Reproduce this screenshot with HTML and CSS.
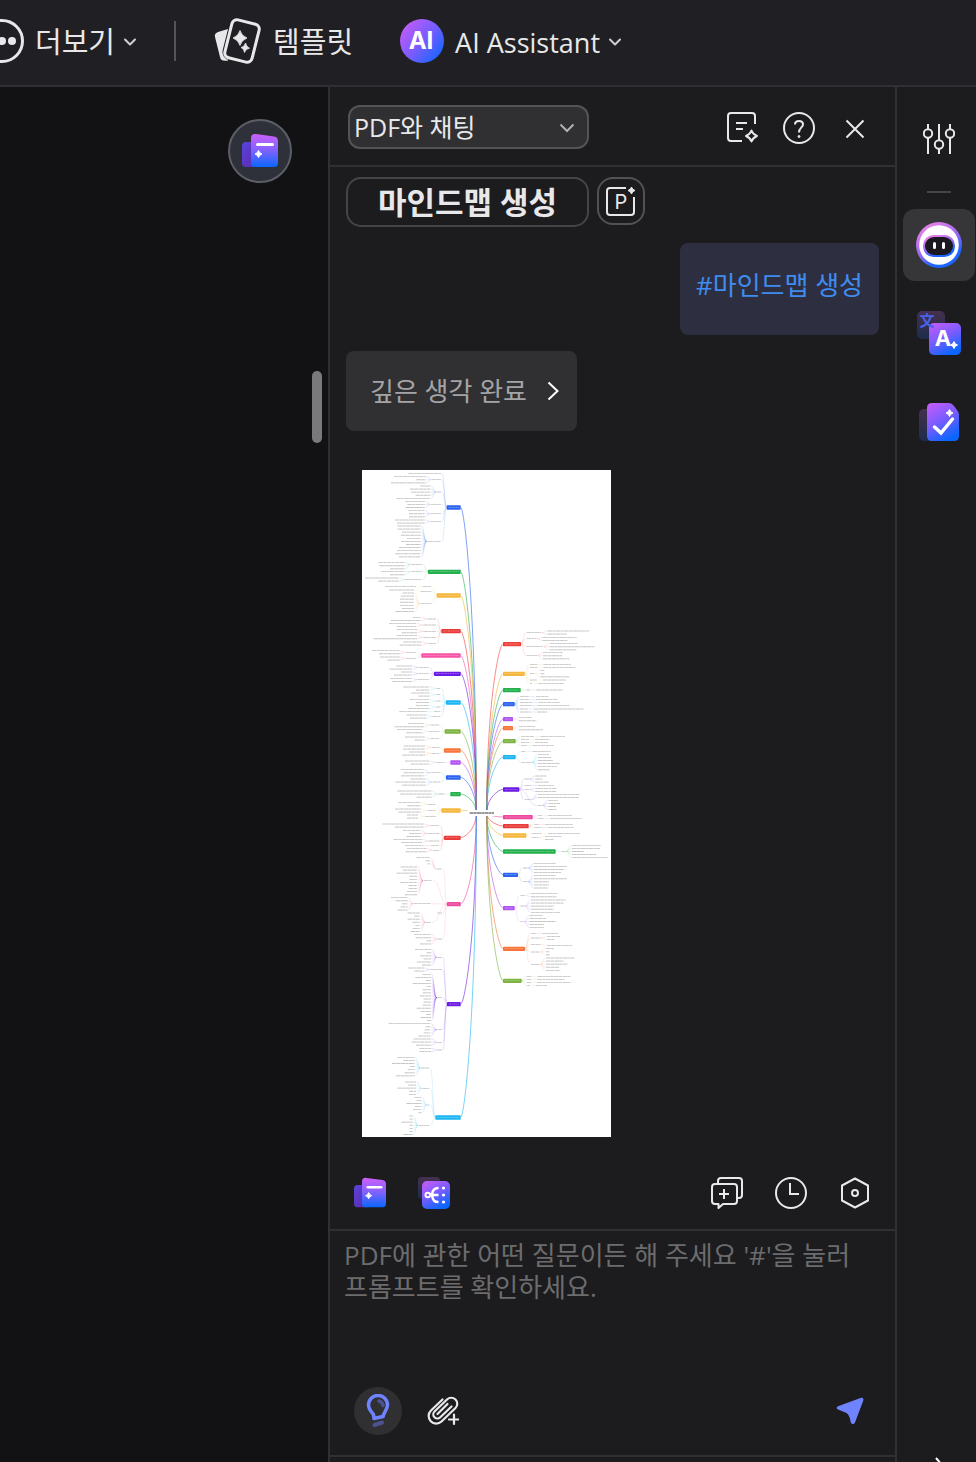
FILE: index.html
```html
<!DOCTYPE html>
<html lang="ko">
<head>
<meta charset="utf-8">
<meta name="viewport" content="width=device-width, initial-scale=1">
<title>AI Assistant</title>
<link rel="stylesheet" href="styles.css">
</head>
<body>
<svg class="defs" width="0" height="0" aria-hidden="true">
  <defs>
    <linearGradient id="brand" x1="0.1" y1="0" x2="0.6" y2="1"><stop offset="0" stop-color="#c45cf8"/><stop offset="0.5" stop-color="#7a5cff"/><stop offset="1" stop-color="#0a66ff"/></linearGradient>
    <linearGradient id="brand-diag" x1="0" y1="0.1" x2="1" y2="0.9"><stop offset="0" stop-color="#cb5cf5"/><stop offset="0.5" stop-color="#7a5cff"/><stop offset="1" stop-color="#0a66ff"/></linearGradient>
    <linearGradient id="brand-down" x1="0" y1="0" x2="0" y2="1"><stop offset="0" stop-color="#cf60fa"/><stop offset="0.5" stop-color="#7f62ff"/><stop offset="1" stop-color="#0a66ff"/></linearGradient>
    <linearGradient id="brand-back" x1="0" y1="0" x2="1" y2="1"><stop offset="0" stop-color="#5a43dc"/><stop offset="1" stop-color="#5a28a8"/></linearGradient>
    <linearGradient id="brand-dim" x1="0" y1="0" x2="0" y2="1"><stop offset="0" stop-color="#46304f"/><stop offset="1" stop-color="#1d2c4c"/></linearGradient>
    <linearGradient id="ring" x1="0.2" y1="0" x2="0.75" y2="1"><stop offset="0" stop-color="#f284e4"/><stop offset="0.5" stop-color="#9a68f4"/><stop offset="0.8" stop-color="#1c66ff"/></linearGradient>
    <symbol id="i-cards" viewBox="0 0 36 36">
      <rect x="0" y="9" width="18" height="25" rx="4" fill="url(#brand-back)"/>
      <path d="M9 5Q9 .5 14 1L32 3.500Q36 4 36 8V30Q36 34 32 34H13Q9 34 9 30Z" fill="url(#brand-down)"/>
      <path d="M15.500 11.500H30.500" stroke="#fff" stroke-width="3" stroke-linecap="round"/>
      <path d="M16.500 17.500Q17.300 20.300 20 21Q17.300 21.700 16.500 24.500Q15.700 21.700 13 21Q15.700 20.300 16.500 17.500Z" fill="#fff" stroke="#fff"/>
    </symbol>
    <symbol id="i-chevron" viewBox="0 0 14 10"><path d="M2 2.500 7 7.500 12 2.500" fill="none" stroke="currentColor" stroke-width="2" stroke-linecap="round" stroke-linejoin="round"/></symbol>
  </defs>
</svg>

<header class="topbar">
  <button class="tool">
    <svg width="44" height="44" viewBox="0 0 44 44" fill="currentColor"><circle cx="22" cy="22" r="20.500" fill="none" stroke="currentColor" stroke-width="3"/><circle cx="12" cy="22" r="4"/><circle cx="22" cy="22" r="4"/><circle cx="32" cy="22" r="4"/></svg>
    <span class="tool-label">더보기</span>
    <svg class="caret" width="14" height="10"><use href="#i-chevron"/></svg>
  </button>
  <span class="divider"></span>
  <button class="tool">
    <svg width="48" height="48" viewBox="0 0 48 48" fill="none" stroke="currentColor">
      <path d="M14 12 4 15Q0 16.500 1 20L6 40Q7 45 14 43.500Z" fill="currentColor" stroke="none"/>
      <g transform="rotate(14 28 24)"><rect x="12.500" y="3.500" width="31" height="41" rx="7" fill="#202024" stroke="#202024" stroke-width="2"/><rect x="14" y="4.500" width="28" height="39" rx="5" stroke-width="3"/></g>
      <path d="M26 13.500Q27.500 19 33 21Q27.500 23 26 28.500Q24.500 23 19 21Q24.500 19 26 13.500ZM31.500 26Q32.500 30 35.500 31.200Q31.500 31.800 30.500 35.500Q30 31.500 27 30.500Q30.500 30 31.500 26Z" fill="currentColor" stroke-width=".8"/>
    </svg>
    <span class="tool-label">템플릿</span>
  </button>
  <button class="tool tool-ai">
    <svg width="44" height="44" viewBox="0 0 44 44"><circle cx="22" cy="22" r="22" fill="url(#brand-diag)"/><text class="ai-text" x="21" y="30" text-anchor="middle">AI</text></svg>
    <span class="tool-label">AI Assistant</span>
    <svg class="caret" width="14" height="10"><use href="#i-chevron"/></svg>
  </button>
</header>

<div class="workspace">
  <main class="canvas">
    <button class="float-button" aria-label="AI 카드"><svg width="36" height="36"><use href="#i-cards"/></svg></button>
    <span class="scroll-thumb"></span>
  </main>

  <section class="panel">
    <header class="panel-head">
      <div class="select-wrap">
        <select class="mode" aria-label="모드"><option>PDF와 채팅</option></select>
        <svg class="select-caret" width="16" height="10" viewBox="0 0 16 10"><path d="M1.500 1.500 8 8 14.500 1.500" fill="none" stroke="currentColor" stroke-width="2"/></svg>
      </div>
      <div class="head-actions">
        <button class="icon-button" aria-label="노트">
          <svg width="32" height="32" viewBox="0 0 32 32" fill="none" stroke="currentColor" stroke-width="2" stroke-linejoin="round"><path d="M28 12V4Q28 1 25 1H4Q1 1 1 4V26Q1 29 4 29H15M9 11H20M9 17H16"/><path d="M24.500 18.500Q26 22.500 30 24Q26 25.500 24.500 29.500Q23 25.500 19 24Q23 22.500 24.500 18.500Z"/></svg>
        </button>
        <button class="icon-button" aria-label="도움말">
          <svg width="32" height="32" viewBox="0 0 32 32" fill="none" stroke="currentColor" stroke-width="2"><circle cx="16" cy="16" r="15"/><path d="M12 12.500Q12 9 16 9T20 12.500C20 15.500 16 15.500 16 20.500"/><circle cx="16" cy="24.500" r="1" fill="currentColor" stroke-width="1"/></svg>
        </button>
        <button class="icon-button" aria-label="닫기">
          <svg width="20" height="22" viewBox="0 0 20 22" fill="none" stroke="currentColor" stroke-width="2"><path d="M1.500 3.500 18.500 20.500M18.500 3.500 1.500 20.500"/></svg>
        </button>
      </div>
    </header>

    <div class="chat">
      <div class="prompt-row">
        <button class="pill">마인드맵 생성</button>
        <button class="pill pill-icon" aria-label="프롬프트">
          <svg width="30" height="30" viewBox="0 0 30 30" fill="none" stroke="currentColor" stroke-width="2"><path d="M20 2H4Q1 2 1 5V26Q1 29 4 29H25Q28 29 28 26V11"/><path d="M25.500 1Q26.300 3.800 29 4.500Q26.300 5.200 25.500 8Q24.700 5.200 22 4.500Q24.700 3.800 25.500 1Z" fill="currentColor" stroke-width="1"/><text class="p-text" x="15" y="23" text-anchor="middle">P</text></svg>
        </button>
      </div>
      <p class="bubble">#마인드맵 생성</p>
      <button class="thinking">깊은 생각 완료
        <svg width="12" height="20" viewBox="0 0 12 20" fill="none" stroke="#fff" stroke-width="2"><path d="M1.500 1.500 10.500 10 1.500 18.500"/></svg>
      </button>
      <svg class="mindmap" id="mindmap" viewBox="0 0 747 2001" role="img" aria-label="마인드맵"></svg>
    </div>

    <div class="quickbar">
      <button class="icon-button" aria-label="카드"><svg width="32" height="32"><use href="#i-cards"/></svg></button>
      <button class="icon-button" aria-label="마인드맵">
        <svg width="32" height="32" viewBox="0 0 32 32"><rect width="22" height="22" rx="4" fill="url(#brand-dim)"/><rect x="4" y="4" width="28" height="28" rx="5" fill="url(#brand)"/><g fill="none" stroke="#fff" stroke-width="2.500"><circle cx="9.800" cy="18" r="2.300" stroke-width="2"/><path d="M12 18H20.500M20.500 11C13.500 11 14.500 17 14 18C14.500 19 13.500 25 20.500 25"/></g><g fill="#fff"><circle cx="25.500" cy="11" r="1.600"/><circle cx="25.500" cy="18" r="1.600"/><circle cx="25.500" cy="25" r="1.600"/></g></svg>
      </button>
      <span class="spacer"></span>
      <button class="icon-button" aria-label="새 채팅">
        <svg width="32" height="32" viewBox="0 0 32 32" fill="none" stroke="currentColor" stroke-width="2" stroke-linejoin="round"><path d="M7 7V4Q7 1 10 1H28Q31 1 31 4V18Q31 21 28 21H26"/><path d="M4 7H23Q26 7 26 10V24Q26 27 23 27H12L7.500 31V27H4Q1 27 1 24V10Q1 7 4 7ZM8 17H18M13 12V22"/></svg>
      </button>
      <button class="icon-button" aria-label="기록">
        <svg width="32" height="32" viewBox="0 0 32 32" fill="none" stroke="currentColor" stroke-width="2"><circle cx="16" cy="16" r="15"/><path d="M15 6V17H24"/></svg>
      </button>
      <button class="icon-button" aria-label="설정">
        <svg width="32" height="32" viewBox="0 0 32 32" fill="none" stroke="currentColor" stroke-width="2" stroke-linejoin="round"><path d="M16 1.500 29 8.500V23.500L16 30.500 3 23.500V8.500Z"/><circle cx="16" cy="16" r="3"/></svg>
      </button>
    </div>

    <form class="composer">
      <textarea class="question" aria-label="질문" placeholder="PDF에 관한 어떤 질문이든 해 주세요 '#'을 눌러 프롬프트를 확인하세요."></textarea>
      <div class="composer-actions">
        <button type="button" class="bulb" aria-label="깊은 생각">
          <svg width="24" height="34" viewBox="0 0 24 34" fill="none" stroke="#6f83ff" stroke-width="3.500" stroke-linejoin="round"><path d="M8 24.500 7.500 20.500C5 17.500 2.500 15 2.500 11A9.500 9.500 0 0 1 21.500 11C21.500 15.500 18 18 17 22.500Z"/><path d="M13 7Q16.500 8 17 11.500" stroke="#4c538f" stroke-linecap="round"/><path d="M8.500 31 16 28.500" stroke="#4c538f" stroke-width="4" stroke-linecap="round"/></svg>
        </button>
        <button type="button" class="icon-button" aria-label="파일 첨부">
          <svg width="32" height="30" viewBox="0 0 32 30" fill="none" stroke="currentColor" stroke-width="2.200" stroke-linecap="round" stroke-linejoin="round"><path d="M15.500 3.500 4 14.500A7.300 7.300 0 0 0 14.500 25.500L28.500 12A6 6 0 0 0 20 3.500L7.500 15.500A4 4 0 0 0 13.300 21.300L24.500 10.500M20.500 8 10.500 18"/><path d="M27 18.500V28M22 23.500H31.500"/></svg>
        </button>
        <span class="spacer"></span>
        <button class="icon-button" aria-label="보내기">
          <svg width="28" height="28" viewBox="0 0 28 28" fill="#6f83ff"><path d="M2 9.200 24.500 1Q28 0 27.300 3.500L19 25.500Q17 29 14.800 25.500Q13.500 17.500 10.500 16L2 12.500Q-.800 11 2 9.200Z"/></svg>
        </button>
      </div>
    </form>
  </section>

  <nav class="rail">
    <button class="rail-item" aria-label="속성">
      <svg width="32" height="32" viewBox="0 0 32 32" fill="none" stroke="currentColor" stroke-width="2"><path d="M5 1V6M5 15V31M16 1V17M16 26V31M27 1V6M27 15V31"/><circle cx="5" cy="10.500" r="4.200"/><circle cx="16" cy="21.500" r="4.200"/><circle cx="27" cy="10.500" r="4.200"/></svg>
    </button>
    <span class="rail-line"></span>
    <button class="rail-item rail-active" aria-label="AI 채팅">
      <svg width="46" height="46" viewBox="0 0 46 46"><circle cx="23" cy="23" r="23" fill="url(#ring)"/><circle cx="23" cy="23" r="19.800" fill="#fff"/><rect x="7" y="13" width="32" height="22" rx="10.500" fill="url(#ring)"/><rect x="9" y="15" width="28" height="18" rx="9" fill="#19191f"/><path d="M18.500 21.500V25.500M27.500 21.500V25.500" stroke="#fff" stroke-width="3" stroke-linecap="round"/></svg>
    </button>
    <button class="rail-item" aria-label="번역">
      <svg width="44" height="44" viewBox="0 0 44 44"><rect width="28" height="28" rx="5" fill="url(#brand-dim)"/><rect x="12" y="12" width="32" height="32" rx="5" fill="url(#brand)"/><text class="han-text" x="10" y="15" text-anchor="middle">文</text><text class="a-text" x="26" y="35" text-anchor="middle">A</text><path d="M37 30.500Q37.800 33.300 40.500 34Q37.800 34.700 37 37.500Q36.200 34.700 33.500 34Q36.200 33.300 37 30.500Z" fill="#fff" stroke="#fff"/></svg>
    </button>
    <button class="rail-item" aria-label="교정">
      <svg width="40" height="38" viewBox="0 0 40 38"><rect y="6" width="20" height="32" rx="5" fill="url(#brand-dim)"/><path d="M13 0H30Q33 0 35 3L39 8.500Q40 10 40 12V33Q40 38 35 38H13Q8 38 8 33V5Q8 0 13 0Z" fill="url(#brand)"/><path d="M15.500 24 22 30 33.500 16" fill="none" stroke="#fff" stroke-width="3.500" stroke-linecap="round"/><path d="M30.500 6.500Q31.300 9.300 34 10Q31.300 10.700 30.500 13.500Q29.700 10.700 27 10Q29.700 9.300 30.500 6.500Z" fill="#fff" stroke="#fff"/></svg>
    </button>
    <span class="spacer"></span>
    <button class="rail-more" aria-label="펼치기"><svg width="8" height="16" viewBox="0 0 8 16" fill="none" stroke="#fff" stroke-width="2"><path d="M1 1 7 8 1 15"/></svg></button>
  </nav>
</div>
<script src="mindmap.js"></script>
</body>
</html>
```
FILE: mindmap.js
```js
// Branch: [colour, y, outer edge, groups]
// Group: [y, label outer edge, label inner edge, leaf anchor, first leaf y, leaf ends]
const left = [
  ['#2c63f0', 112, 254, [[10, 0, 237, 237, 10, [139]], [29, 210, 237, 191, 20, [96, 163, 87]], [66, 224, 237, 205, 48, [175, 144, 148, 161, 103]], [103, 206, 237, 188, 94, [129, 136, 132]], [131, 206, 237, 188, 122, [139, 141, 141]], [154, 206, 237, 188, 150, [99, 105]], [214, 196, 237, 176, 168, [107, 107, 120, 117, 135, 117, 132, 111, 105, 100, 111]]]],
  ['#22b04c', 305, 198, [[283, 147, 180, 128, 278, [49, 52, 84]], [305, 147, 180, 128, 305, [58, 84]], [329, 129, 180, 110, 324, [9, 49]]]],
  ['#f5b63c', 376, 224, [[350, 182, 208, 162, 350, [69]], [364, 176, 208, 156, 360, [82]], [401, 176, 208, 156, 369, [122, 117, 114, 114, 114, 120, 100]]]],
  ['#e93a38', 483, 238, [[447, 197, 222, 176, 442, [153, 86]], [465, 184, 222, 162, 460, [81, 104]], [484, 184, 222, 165, 479, [104, 119]], [502, 184, 222, 165, 497, [104, 35]], [520, 199, 222, 179, 516, [124, 113]]]],
  ['#f752a5', 556, 178, [[547, 133, 162, 113, 542, [29, 51]], [565, 133, 162, 113, 561, [54, 77]]]],
  ['#6c1be4', 611, 216, [[592, 170, 200, 150, 588, [103, 83]], [611, 170, 200, 150, 606, [118, 96]], [629, 167, 200, 150, 625, [85, 91]]]],
  ['#1cb6f2', 697, 252, [[655, 223, 235, 202, 651, [124, 162]], [674, 223, 235, 202, 669, [148, 170]], [693, 223, 235, 202, 688, [143, 162]], [711, 223, 235, 202, 706, [161, 139]], [725, 216, 235, 194, 725, [112]], [739, 211, 235, 193, 735, [134, 144]]]],
  ['#7cb342', 784, 248, [[765, 206, 232, 185, 761, [138, 98]], [784, 201, 232, 181, 779, [105, 133]], [806, 206, 232, 188, 801, [129, 157]]]],
  ['#f9743a', 841, 246, [[832, 209, 232, 189, 828, [125, 123]], [850, 209, 232, 189, 846, [142, 121]]]],
  ['#b255f0', 877, 265, [[877, 223, 250, 202, 873, [129, 146]]]],
  ['#2c63f0', 922, 252, [[908, 206, 235, 185, 899, [116, 125, 117]], [936, 213, 235, 191, 927, [146, 100, 121]]]],
  ['#22b04c', 972, 265, [[972, 229, 249, 209, 963, [106, 115, 164]]]],
  ['#f5b63c', 1021, 238, [[1003, 196, 222, 176, 998, [108, 136]], [1021, 196, 222, 176, 1017, [99, 109]], [1040, 189, 222, 168, 1035, [135, 135]]]],
  ['#e93a38', 1103, 246, [[1067, 206, 232, 185, 1062, [62, 99]], [1090, 196, 232, 176, 1081, [122, 142, 133]], [1113, 200, 232, 180, 1108, [94, 118]], [1127, 206, 232, 185, 1127, [129]], [1141, 213, 232, 193, 1136, [135, 131]]]],
  ['#ee479e', 1302, 255, [[1197, 224, 240, 204, 1163, [163, 191, 197]], [1232, 185, 210, 165, 1191, [116, 123, 104, 142, 142, 115, 140, 140, 135, 128]], [1301, 155, 207, 137, 1283, [87, 101, 120, 116, 106]], [1329, 226, 240, 207, 1329, []], [1357, 192, 207, 173, 1329, [137, 157, 137, 151, 160, 152, 146]], [1407, 226, 240, 208, 1394, [156, 161, 194, 174]]]],
  ['#6c1be4', 1602, 255, [[1462, 226, 240, 208, 1439, [159, 194, 174, 185, 165, 180]], [1499, 205, 240, 187, 1494, [139, 157]], [1583, 226, 240, 207, 1513, [181, 160, 191, 152, 194, 182, 182, 174, 185, 185, 182, 164, 176, 192, 176, 194]], [1679, 226, 240, 204, 1661, [80, 191, 188, 185, 169]], [1717, 226, 240, 208, 1707, [155, 149, 162]], [1740, 226, 240, 208, 1735, [172, 172]]]],
  ['#1cb6f2', 1942, 220, [[1794, 177, 202, 158, 1762, [106, 124, 90, 145, 137, 128, 102]], [1855, 181, 202, 162, 1836, [129, 139, 106, 141, 141]], [1905, 196, 202, 178, 1882, [157, 164, 133, 159, 153, 169]], [1966, 170, 202, 152, 1938, [142, 143, 118, 143, 143, 143, 124]]]]
];
const right = [
  ['#f0403c', 522, 477, [[488, 537, 494, 556, 483, [682, 614]], [506, 522, 494, 542, 502, [644, 616]], [530, 543, 492, 563, 521, [647, 697, 643]], [557, 525, 494, 543, 548, [602, 600, 622]]]],
  ['#f5b63c', 611, 488, [[584, 526, 504, 544, 584, [627]], [593, 526, 504, 544, 593, [641]], [611, 516, 504, 535, 602, [547, 547, 622]], [630, 524, 504, 543, 630, [612]], [640, 510, 504, 529, 640, [606]]]],
  ['#22b04c', 660, 476, [[660, 505, 493, 523, 660, [603]]]],
  ['#2c63f0', 702, 458, [[680, 502, 474, 522, 680, [559]], [689, 503, 474, 521, 689, [587]], [698, 511, 474, 529, 698, [594]], [707, 508, 474, 526, 707, [622]], [717, 497, 474, 516, 717, [664]], [726, 506, 474, 525, 726, [556]]]],
  ['#b255f0', 747, 453, [[747, 0, 470, 470, 743, [509, 523]]]],
  ['#f9743a', 774, 453, [[774, 0, 470, 470, 770, [519, 543]]]],
  ['#7cb342', 813, 461, [[800, 517, 477, 535, 800, [609]], [809, 502, 477, 519, 809, [563]], [818, 501, 477, 519, 818, [559]], [827, 495, 477, 512, 827, [577]]]],
  ['#1cb6f2', 861, 461, [[844, 492, 477, 511, 844, [566]], [877, 509, 477, 528, 853, [561, 568, 572, 594, 585, 562]]]],
  ['#6c1be4', 958, 472, [[927, 501, 488, 520, 918, [553, 541, 561]], [946, 509, 488, 528, 946, [575]], [958, 502, 488, 520, 955, [583, 582]], [989, 508, 488, 527, 973, [653, 650]], [1006, 540, 527, 559, 991, [588, 594, 582, 583]]]],
  ['#ee479e', 1041, 512, [[1037, 540, 528, 558, 1037, [630]], [1046, 546, 528, 564, 1046, [659]]]],
  ['#e93a38', 1068, 500, [[1063, 530, 517, 548, 1063, [632]], [1072, 538, 517, 557, 1072, [636]]]],
  ['#f5b63c', 1096, 493, [[1090, 538, 509, 558, 1090, [654]], [1103, 530, 509, 549, 1099, [600, 576]]]],
  ['#22b04c', 1144, 581, [[1144, 611, 598, 630, 1126, [716, 714, 665, 703, 737]]]],
  ['#2c63f0', 1214, 468, [[1194, 497, 483, 516, 1180, [582, 614, 607, 597]], [1235, 497, 483, 516, 1217, [582, 614, 561, 561, 558]]]],
  ['#b255f0', 1314, 458, [[1276, 488, 475, 507, 1271, [587, 584]], [1308, 488, 475, 507, 1290, [611, 605, 575, 575, 594]], [1355, 484, 475, 503, 1336, [542, 553, 581, 546, 546]]]],
  ['#f9743a', 1436, 489, [[1390, 523, 507, 541, 1390, [588]], [1404, 536, 507, 555, 1399, [594, 577]], [1423, 536, 507, 555, 1427, [631]], [1446, 533, 507, 552, 1436, [576, 562, 563]], [1483, 533, 507, 552, 1464, [637, 605, 616, 592, 595]]]],
  ['#7cb342', 1532, 479, [[1519, 508, 494, 526, 1519, [627]], [1528, 508, 494, 526, 1528, [608]], [1537, 508, 494, 526, 1537, [628]], [1546, 504, 494, 521, 1546, [555]]]]
];

const STEP = 9.25;
const ROOT_Y = 1029;
const parts = [];
const text = (a, b, y) => parts.push(`<path class="leaf" d="M${Math.min(a, b)} ${y}H${Math.max(a, b)}"/>`);
const link = (x1, y1, x2, y2, color) => {
  const m = (x1 + x2) / 2;
  parts.push(`<path class="link" stroke="${color}" d="M${x1} ${y1}C${m} ${y1} ${m} ${y2} ${x2} ${y2}"/>`);
};

function drawSide(branches, edge, rootX, dir) {
  for (const [color, y, outer, groups] of branches) {
    const bend = edge - dir * 12;
    parts.push(`<path class="trunk" stroke="${color}" d="M${edge} ${y}C${bend} ${y} ${rootX} ${y + (ROOT_Y - y) * 0.35} ${rootX} ${ROOT_Y}"/>`);
    for (const [gy, labelOuter, labelInner, anchor, firstY, ends] of groups) {
      link(outer, y, labelInner + -dir * 3, gy, color);
      if (labelOuter) text(labelOuter, labelInner, gy);
      ends.forEach((end, i) => {
        const ly = firstY + i * STEP;
        if (labelOuter) link(labelOuter + dir * 2, gy, anchor - dir * 2, ly, color);
        text(anchor, end, ly);
      });
    }
    const x = Math.min(edge, outer);
    const w = Math.abs(edge - outer);
    parts.push(`<rect x="${x}" y="${y - 6}" width="${w}" height="13" rx="2" fill="${color}"/><path class="caption" d="M${x + 6} ${y}H${x + w - 5}"/>`);
  }
}

drawSide(left, 296, 343, -1);
drawSide(right, 423, 374, 1);
parts.push(`<rect x="316" y="1020" width="84" height="18" fill="#fff"/><path class="root-caption" d="M323 ${ROOT_Y}H396"/>`);
document.getElementById('mindmap').innerHTML = parts.join('');
```
FILE: styles.css
```css
* { box-sizing: border-box; }

body {
  margin: 0;
  height: 100vh;
  display: flex;
  flex-direction: column;
  overflow: hidden;
  background: #1c1c1e;
  color: #e8e8ea;
  font-family: "Open Sans", "Noto Sans CJK KR", sans-serif;
  font-size: 26px;
  line-height: 32px;
  word-break: keep-all;
}

button, select, textarea {
  font: inherit;
  color: inherit;
  background: none;
  border: 0;
  padding: 0;
  margin: 0;
}

svg { display: block; flex: none; }
.defs { position: absolute; }
.spacer { flex: 1; }

.topbar {
  display: flex;
  align-items: center;
  height: 87px;
  flex: none;
  padding-bottom: 4px;
  margin-left: -20px;
  background: #202024;
  border-bottom: 2px solid #303032;
}
.tool { display: flex; align-items: center; white-space: nowrap; }
.tool-label { margin-left: 11px; padding-top: 2px; font-size: 29px; line-height: 40px; }
.tool-ai { margin-left: 47px; }
.tool-ai .tool-label { font-size: 27px; padding-top: 4px; }
.caret { margin: 2px 0 0 8px; color: #d0d0d4; }
.divider { width: 2px; height: 40px; margin: 0 38px 0 37px; background: #555559; }
.ai-text { font: 700 24px Inter, sans-serif; fill: #fff; }

.workspace {
  flex: 1;
  min-height: 0;
  display: grid;
  grid-template-columns: minmax(0, 1fr) 569px 79px;
}

.canvas {
  display: flex;
  flex-direction: column;
  align-items: flex-end;
  padding: 32px 6px 0 0;
  background: #121214;
}
.float-button {
  display: grid;
  place-items: center;
  width: 64px;
  height: 64px;
  margin-right: 30px;
  border: 2px solid #5c5f66;
  border-radius: 50%;
  background: #2e313a;
}
.scroll-thumb { width: 10px; height: 72px; margin-top: 188px; border-radius: 5px; background: #79797b; }

.panel {
  display: flex;
  flex-direction: column;
  min-height: 0;
  border: solid #303032;
  border-width: 0 2px;
}
.panel-head {
  display: flex;
  align-items: center;
  justify-content: space-between;
  height: 80px;
  flex: none;
  padding: 2px 24px 0 18px;
  border-bottom: 2px solid #303032;
}
.select-wrap { position: relative; width: 241px; }
.mode {
  appearance: none;
  width: 100%;
  height: 44px;
  padding: 0 40px 0 4px;
  font-size: 25px;
  border: 2px solid #545456;
  border-radius: 12px;
  background: #303032;
}
.select-caret { position: absolute; right: 14px; top: 18px; color: #b0b0b2; pointer-events: none; }
.head-actions { display: flex; align-items: center; gap: 24px; padding-top: 2px; }
.head-actions .icon-button { min-width: 32px; }
.icon-button { display: grid; place-items: center; }

.chat { flex: 1; min-height: 0; display: flex; flex-direction: column; align-items: flex-start; padding: 10px 16px 0; }
.prompt-row { display: flex; gap: 8px; align-items: flex-start; }
.pill {
  width: 243px;
  height: 50px;
  border: 2px solid #454547;
  border-radius: 15px;
  font-size: 31px;
  font-weight: 700;
  white-space: nowrap;
}
.pill-icon { display: grid; place-items: center; width: 48px; height: 48px; border-color: #525254; border-radius: 16px; }
.p-text { font: 400 20px Inter, sans-serif; fill: #e8e8ea; stroke: none; }
.bubble {
  align-self: flex-end;
  margin: 16px 0;
  padding: 26px 16px 34px;
  border-radius: 8px;
  background: #2d2f40;
  color: #3f8cf0;
}
.thinking {
  display: flex;
  align-items: center;
  gap: 20px;
  height: 80px;
  padding: 0 18px 0 24px;
  border-radius: 8px;
  background: #303032;
  color: #a4a4a6;
}
.mindmap { width: 249px; height: 667px; margin: 39px 0 0 16px; background: #fff; }
.link { fill: none; stroke-width: 1.2; opacity: .35; }
.trunk { fill: none; stroke-width: 3; opacity: .6; }
.leaf { stroke: #555; stroke-width: 2; stroke-dasharray: 14 1 9 1; opacity: .5; }
.caption { stroke: #fff; stroke-width: 2; stroke-dasharray: 6 2 4 2; opacity: .5; }
.root-caption { stroke: #222; stroke-width: 4; stroke-dasharray: 12 1 8 1; opacity: .6; }

.quickbar { display: flex; align-items: center; gap: 32px; height: 72px; flex: none; padding: 0 24px; }
.composer {
  display: flex;
  flex-direction: column;
  height: 228px;
  flex: none;
  margin-bottom: 5px;
  border: solid #303032;
  border-width: 2px 0;
}
.question { flex: 1; min-height: 0; padding: 8px 14px; resize: none; overflow: hidden; outline: 0; word-break: keep-all; }
.question::placeholder { color: #6c6c6e; opacity: 1; }
.composer-actions { display: flex; align-items: center; gap: 25px; padding: 0 31px 20px 24px; }
.bulb { display: grid; place-items: center; width: 48px; height: 48px; border-radius: 50%; background: #303032; }

.rail { display: flex; flex-direction: column; align-items: center; padding: 36px 0 0 5px; overflow: hidden; }
.rail-item { display: grid; place-items: center; width: 72px; height: 32px; flex: none; margin-bottom: 36px; }
.rail-line { width: 24px; height: 2px; flex: none; margin-bottom: 16px; background: #454547; }
.rail-item.rail-active { height: 72px; margin-bottom: 30px; border-radius: 12px; background: #363638; }
.rail-active ~ .rail-item { height: 44px; margin-bottom: 45px; }
.rail-more { height: 5px; overflow: hidden; display: flex; align-items: flex-start; }
.han-text { font: 700 15px "Noto Sans CJK SC", sans-serif; fill: #4a62e8; }
.a-text { font: 700 22px Inter, sans-serif; fill: #fff; }
```
